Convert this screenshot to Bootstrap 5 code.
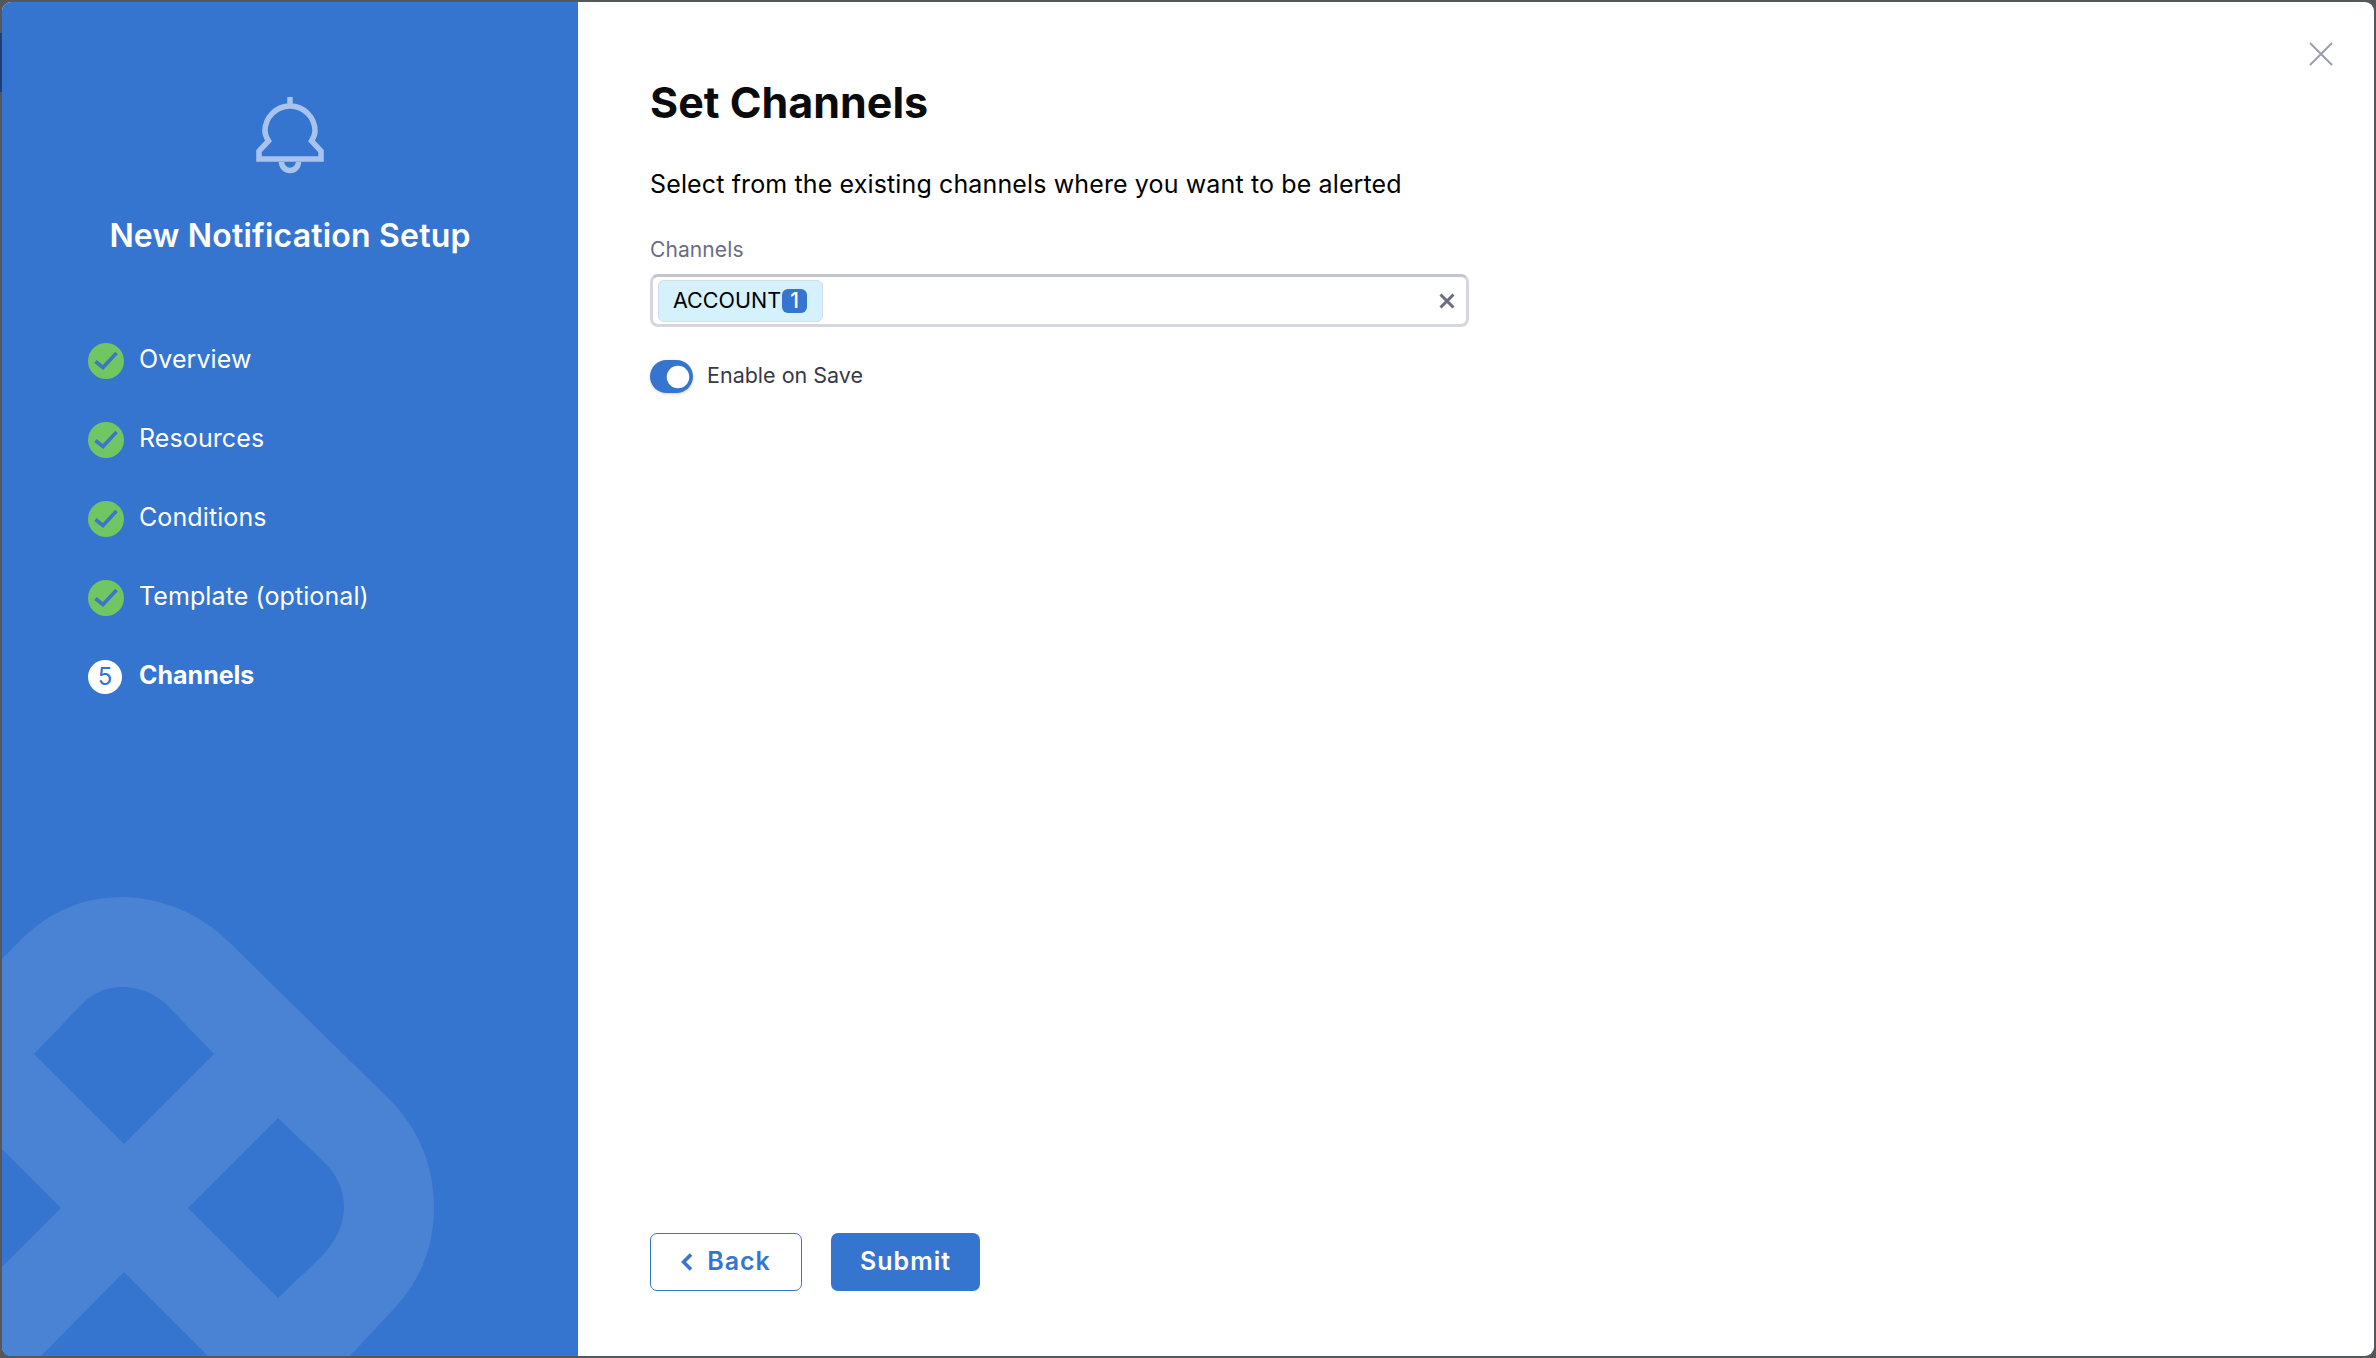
<!doctype html>
<html lang="en">
<head>
<meta charset="utf-8">
<title>New Notification Setup</title>
<link href="https://cdn.jsdelivr.net/npm/bootstrap@5.3.0/dist/css/bootstrap.min.css" rel="stylesheet">
<style>
html,body{height:100%;margin:0}
body{background:#54585a linear-gradient(#1f3f73,#1f3f73) 0 33px/2px 59px no-repeat;font-family:Inter,"Liberation Sans",sans-serif;padding:2px;overflow:hidden}
.dlg{height:1354px;background:#fff;border-radius:9px;overflow:hidden;position:relative}
.side{width:576px;flex:none;background:#3575cf;color:#fff;position:relative;overflow:hidden;padding-top:95px}
.wm{position:absolute;left:-2px;top:-2px;width:578px;height:1358px}
.bell{display:block;margin:0 auto;width:576px;height:80px}
.side-title{font-size:32px;font-weight:600;letter-spacing:.2px;text-align:center;line-height:40px;margin:39px 0 0;position:relative}
.steps{list-style:none;margin:65px 0 0;padding:0 0 0 86px;position:relative}
.steps li{display:flex;align-items:center;height:79px;font-size:25px;letter-spacing:.1px;gap:15px}
.steps .ttl{position:relative;top:-1px}
.steps li.cur{font-weight:700;font-size:25px;letter-spacing:0}
.dot{width:36px;height:36px;flex:none;display:block}
.num{width:34px;height:34px;border-radius:50%;background:#fff;color:#3575cf;font-size:24px;font-weight:400;display:flex;align-items:center;justify-content:center;margin-right:2px;flex:none}
.pane{padding:0 0 65px 72px;color:#000}
.pane h1{font-size:43px;font-weight:700;line-height:52px;margin:74px 0 0;color:#0b0b0d}
.desc{font-size:25px;letter-spacing:.13px;line-height:32px;margin:40px 0 0;color:#000}
.fld-label{font-size:21px;letter-spacing:.1px;line-height:28px;color:#6b6d85;margin:36px 0 0;display:block}
.tagbox{width:819px;height:53px;margin-top:10px;border:3px solid #d6d6de;border-top-color:#c4c4cc;border-radius:8px;padding:0 11px 0 5px}
.tagchip{height:42px;width:165px;background:#d4f1fc;border:1px solid #d0dfe9;border-radius:6px;font-size:21.5px;padding-left:14px;gap:1px;color:#000}
.tagnum.badge{width:25px;height:24px;background:#3575cf;border-radius:6px;font-size:21px;font-weight:500;padding:0;display:flex;align-items:center;justify-content:center;color:#fff}
.sw{margin:33px 0 0;padding:0;min-height:0;gap:14px}
.sw .form-check-input{width:43px;height:33px;margin:0;float:none;border:0;background-color:#3575cf;background-size:30px 30px;background-position:right -1px center;border-radius:17px;box-shadow:0 1px 3px rgba(40,41,61,.2)}
.sw label{font-size:21.5px;color:#383946;position:relative;top:-1px}
.act{gap:29px}
.act .btn{height:58px;font-size:25px;font-weight:600;border-radius:7px;letter-spacing:1px;display:flex;align-items:center;justify-content:center;padding:0}
.btn-back{width:152px;background:#fff;color:#3575cf;border:1.5px solid #3575cf;gap:14px}
.btn-back:hover{background:#fff;color:#3575cf;border-color:#3575cf}
.btn-sub{width:149px;background:#3575cf;color:#fff;border:0}
.btn-sub:hover{background:#3575cf;color:#fff}
.closer{position:absolute;top:38px;right:41px;width:24px;height:24px;padding:0;border:0;background:none;display:block}
</style>
</head>
<body>
<div class="dlg d-flex">
  <aside class="side">
    <svg class="wm" viewBox="0 0 578 1358" aria-hidden="true"><path fill="#4a82d4" fill-rule="evenodd" d="M0 961L23 938C50 911 85 897 122 897C160 897 200 913 230 943L390 1100C420 1130 434 1168 434 1207C434 1247 420 1283 390 1313L348 1358H0ZM34 1054L84 1002C95 992 108 987 122 987C137 987 152 992 165 1003L214 1054L124 1144ZM188 1208L278 1118L325 1163C337 1175 344 1190 344 1207C344 1225 335 1243 321 1257L278 1298ZM0 1147L61 1208L0 1269ZM39 1358L124 1272L210 1358Z"/></svg>
    <svg class="bell" viewBox="0 97 576 80" aria-hidden="true"><g transform="translate(-2 0)" fill="none" stroke="#a8c4ed" stroke-width="5.5"><path d="M259 159V151L268.5 141C266 137 265 134 265 131A25 25 0 0 1 315 131C315 134 314 137 311.5 141L321 151V159Z"/><path d="M290 97V106"/><path d="M281.5 162A8.5 8.5 0 0 0 298.5 162"/></g></svg>
    <div class="side-title">New Notification Setup</div>
    <ul class="steps">
      <li><svg class="dot" viewBox="0 0 36 36"><circle cx="18" cy="18" r="18" fill="#6fc662"/><path d="M7.5 18.5L15 24.5L28.5 10" fill="none" stroke="#3f74c9" stroke-width="3.6"/></svg><span class="ttl">Overview</span></li>
      <li><svg class="dot" viewBox="0 0 36 36"><circle cx="18" cy="18" r="18" fill="#6fc662"/><path d="M7.5 18.5L15 24.5L28.5 10" fill="none" stroke="#3f74c9" stroke-width="3.6"/></svg><span class="ttl">Resources</span></li>
      <li><svg class="dot" viewBox="0 0 36 36"><circle cx="18" cy="18" r="18" fill="#6fc662"/><path d="M7.5 18.5L15 24.5L28.5 10" fill="none" stroke="#3f74c9" stroke-width="3.6"/></svg><span class="ttl">Conditions</span></li>
      <li><svg class="dot" viewBox="0 0 36 36"><circle cx="18" cy="18" r="18" fill="#6fc662"/><path d="M7.5 18.5L15 24.5L28.5 10" fill="none" stroke="#3f74c9" stroke-width="3.6"/></svg><span class="ttl">Template (optional)</span></li>
      <li class="cur"><span class="num">5</span><span class="ttl">Channels</span></li>
    </ul>
  </aside>
  <main class="pane flex-grow-1 d-flex flex-column">
    <h1>Set Channels</h1>
    <p class="desc">Select from the existing channels where you want to be alerted</p>
    <label class="fld-label">Channels</label>
    <div class="tagbox d-flex align-items-center justify-content-between">
      <span class="tagchip d-flex align-items-center">ACCOUNT<span class="badge tagnum">1</span></span>
      <svg width="16" height="16" viewBox="0 0 16 16" aria-hidden="true"><path d="M1.5 1.5L14.5 14.5M14.5 1.5L1.5 14.5" stroke="#6b6d85" stroke-width="3" fill="none"/></svg>
    </div>
    <div class="form-check form-switch sw d-flex align-items-center">
      <input class="form-check-input" type="checkbox" role="switch" id="en" checked>
      <label class="form-check-label" for="en">Enable on Save</label>
    </div>
    <div class="act d-flex mt-auto">
      <button class="btn btn-back" type="button"><svg width="12" height="18" viewBox="0 0 12 18" aria-hidden="true"><path d="M10 1.5L2.5 9L10 16.5" fill="none" stroke="#3575cf" stroke-width="3.6"/></svg>Back</button>
      <button class="btn btn-sub" type="button">Submit</button>
    </div>
  </main>
  <button class="closer" type="button" aria-label="Close"><svg width="24" height="24" viewBox="0 0 24 24"><path d="M1 1L23 23M23 1L1 23" stroke="#9c9cb4" stroke-width="2" fill="none"/></svg></button>
</div>
<script src="https://cdn.jsdelivr.net/npm/bootstrap@5.3.0/dist/js/bootstrap.bundle.min.js"></script>
</body>
</html>
